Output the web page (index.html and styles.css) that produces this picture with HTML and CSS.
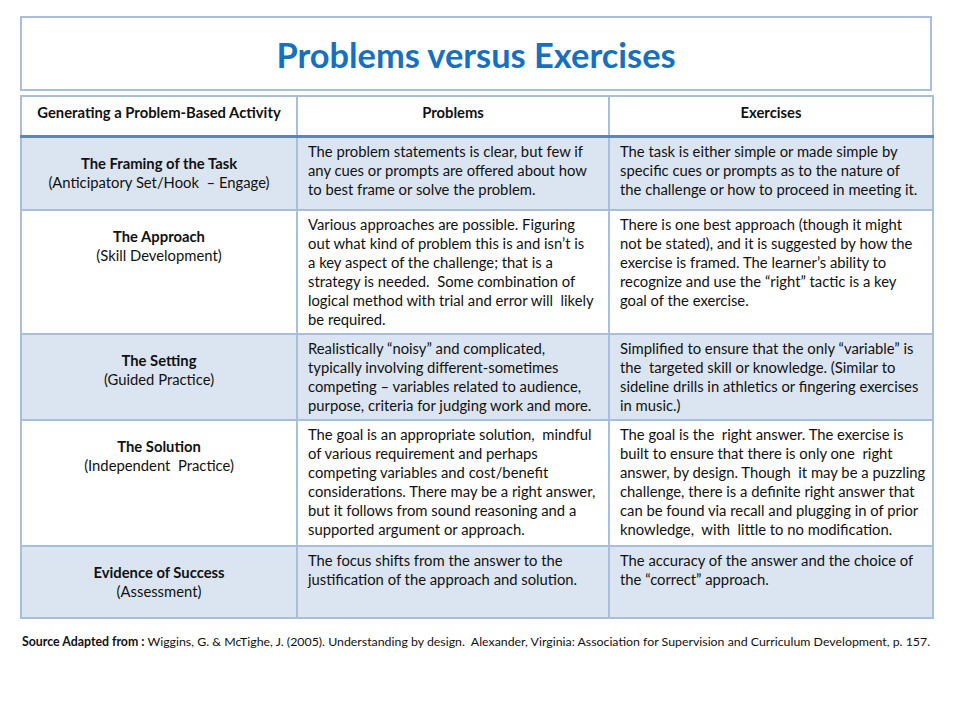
FILE: index.html
```html
<!DOCTYPE html>
<html>
<head>
<meta charset="utf-8">
<link rel="stylesheet" href="styles.css">
</head>
<body>
<div class="page">
  <div class="title-box"><h1 class="title">Problems versus Exercises</h1></div>
  <table class="grid">
    <colgroup><col class="c1"><col class="c2"><col class="c3"></colgroup>
    <thead>
      <tr class="head"><th>Generating a Problem-Based Activity</th><th>Problems</th><th>Exercises</th></tr>
    </thead>
    <tbody>
      <tr class="shade r1">
        <td class="lab"><b>The Framing of the Task</b><br>(Anticipatory Set/Hook &nbsp;– Engage)</td>
        <td>The problem statements is clear, but few if<br>any cues or prompts are offered about how<br>to best frame or solve the problem.</td>
        <td>The task is either simple or made simple by<br>specific cues or prompts as to the nature of<br>the challenge or how to proceed in meeting it.</td>
      </tr>
      <tr class="r2">
        <td class="lab"><b>The Approach</b><br>(Skill Development)</td>
        <td>Various approaches are possible. Figuring<br>out what kind of problem this is and isn’t is<br>a key aspect of the challenge; that is a<br>strategy is needed. &nbsp;Some combination of<br>logical method with trial and error will &nbsp;likely<br>be required.</td>
        <td>There is one best approach (though it might<br>not be stated), and it is suggested by how the<br>exercise is framed. The learner’s ability to<br>recognize and use the “right” tactic is a key<br>goal of the exercise.</td>
      </tr>
      <tr class="shade r3">
        <td class="lab"><b>The Setting</b><br>(Guided Practice)</td>
        <td>Realistically “noisy” and complicated,<br>typically involving different-sometimes<br>competing – variables related to audience,<br>purpose, criteria for judging work and more.</td>
        <td>Simplified to ensure that the only “variable” is<br>the &nbsp;targeted skill or knowledge. (Similar to<br>sideline drills in athletics or fingering exercises<br>in music.)</td>
      </tr>
      <tr class="r4">
        <td class="lab"><b>The Solution</b><br>(Independent &nbsp;Practice)</td>
        <td>The goal is an appropriate solution, &nbsp;mindful<br>of various requirement and perhaps<br>competing variables and cost/benefit<br>considerations. There may be a right answer,<br>but it follows from sound reasoning and a<br>supported argument or approach.</td>
        <td>The goal is the &nbsp;right answer. The exercise is<br>built to ensure that there is only one &nbsp;right<br>answer, by design. Though &nbsp;it may be a puzzling<br>challenge, there is a definite right answer that<br>can be found via recall and plugging in of prior<br>knowledge, &nbsp;with &nbsp;little to no modification.</td>
      </tr>
      <tr class="shade r5">
        <td class="lab"><b>Evidence of Success</b><br>(Assessment)</td>
        <td>The focus shifts from the answer to the<br>justification of the approach and solution.</td>
        <td>The accuracy of the answer and the choice of<br>the “correct” approach.</td>
      </tr>
    </tbody>
  </table>
  <p class="source"><b>Source Adapted from :</b> Wiggins, G. &amp; McTighe, J. (2005). Understanding by design. &nbsp;Alexander, Virginia: Association for Supervision and Curriculum Development, p. 157.</p>
</div>
</body>
</html>
```
FILE: styles.css
```css
html, body { margin: 0; padding: 0; background: #fff; }
body { font-family: Lato, "Open Sans", sans-serif; color: #111; }
.page { width: 912px; padding: 16px 0 0 20px; }
.title-box {
  box-sizing: border-box;
  height: 75px;
  border: 2px solid #a7bedd;
  display: flex;
  align-items: center;
  justify-content: center;
}
.title {
  margin: 0;
  font-size: 34.4px;
  font-weight: 700;
  color: #1670bf;
  padding-top: 2px;
}
.grid {
  margin-top: 4px;
  width: 912px;
  border-collapse: collapse;
  table-layout: fixed;
  font-size: 14.8px;
  line-height: 19px;
}
.c1 { width: 276px; }
.c2 { width: 312px; }
.c3 { width: 324px; }
.grid th, .grid td {
  border: 2px solid #a7bedd;
  vertical-align: top;
  white-space: nowrap;
}
.grid th {
  font-weight: 700;
  padding: 6px 4px 0;
  text-align: center;
}
.grid tr.head { height: 40px; }
.grid tr.head th { border-bottom: 3px solid #5a86bf; }
.grid td { padding: 4px 6px 0 10px; text-align: left; }
.grid td.lab { text-align: center; padding: 16px 4px 0; }
.shade td { background: #dbe5f1; }
.r1 { height: 74px; }
.r2 { height: 124px; }
.r3 { height: 86px; }
.r4 { height: 126px; }
.r5 { height: 72px; }
.source {
  margin: 15px 0 0 2px;
  font-size: 12.35px;
  white-space: nowrap;
  color: #111;
}
```
